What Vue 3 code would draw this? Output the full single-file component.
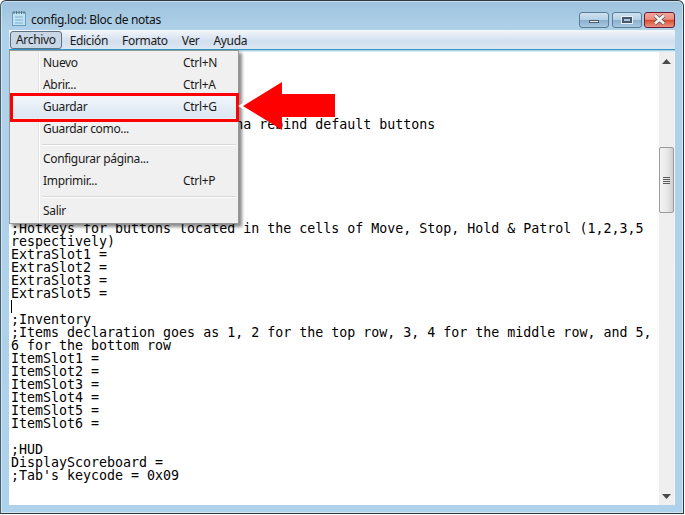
<script setup>
const lines = [
  '', '', '', '', '',
  ';Use this section if you wanna rebind default buttons',
  '', '', '', '', '', '', '',
  ';Hotkeys for buttons located in the cells of Move, Stop, Hold & Patrol (1,2,3,5',
  'respectively)',
  'ExtraSlot1 =', 'ExtraSlot2 =', 'ExtraSlot3 =', 'ExtraSlot5 =',
  '',
  ';Inventory',
  ';Items declaration goes as 1, 2 for the top row, 3, 4 for the middle row, and 5,',
  '6 for the bottom row',
  'ItemSlot1 =', 'ItemSlot2 =', 'ItemSlot3 =', 'ItemSlot4 =', 'ItemSlot5 =', 'ItemSlot6 =',
  '',
  ';HUD',
  'DisplayScoreboard =',
  ";Tab's keycode = 0x09",
]
const menuBar = ['Archivo', 'Edición', 'Formato', 'Ver', 'Ayuda']
</script>

<template>
  <div class="window">
    <header class="titlebar">
      <svg class="appicon" width="14" height="15" viewBox="0 0 14 15">
        <rect x="0.500" y="1.500" width="13" height="13" fill="#bfe3f2" stroke="#6d9cbc" />
        <path d="M2 0v3M4.500 0v3M7 0v3M9.500 0v3M12 0v3" stroke="#55707f" />
        <path d="M3 6h8M3 9h8M3 12h8" stroke="#7fb0d0" />
      </svg>
      <span class="title">config.lod: Bloc de notas</span>
      <div class="controls">
        <span class="ctl min"><i></i></span>
        <span class="ctl max"><i></i></span>
        <span class="ctl close">
          <svg width="13" height="11" viewBox="0 0 13 11">
            <path d="M2 1.500L11 9.500M11 1.500L2 9.500" stroke="#47515c" stroke-width="4" />
            <path d="M2 1.500L11 9.500M11 1.500L2 9.500" stroke="#f4f4f4" stroke-width="2.600" />
          </svg>
        </span>
      </div>
    </header>

    <nav class="menubar">
      <span v-for="(m, i) in menuBar" :key="m" class="mi" :class="{ open: i === 0 }">{{ m }}</span>
    </nav>

    <div class="client">
      <div class="editor">
        <div v-for="(l, i) in lines" :key="i" class="ln">{{ l || '\u00a0' }}<span v-if="i === 19" class="caret"></span></div>
      </div>
      <aside class="scrollbar">
        <svg class="arrow" width="9" height="5" viewBox="0 0 9 5"><path d="M4.500 0L9 5H0z" fill="#4a4a4a" /></svg>
        <div class="track">
          <div class="thumb">
            <span></span><span></span><span></span><span></span>
          </div>
        </div>
        <svg class="arrow" width="9" height="5" viewBox="0 0 9 5"><path d="M4.500 5L9 0H0z" fill="#4a4a4a" /></svg>
      </aside>
    </div>

    <div class="menu">
      <div class="row"><span>Nuevo</span><span class="key">Ctrl+N</span></div>
      <div class="row"><span>Abrir...</span><span class="key">Ctrl+A</span></div>
      <div class="row hot"><span>Guardar</span><span class="key">Ctrl+G</span></div>
      <div class="row"><span>Guardar como...</span></div>
      <div class="sep"></div>
      <div class="row"><span>Configurar página...</span></div>
      <div class="row"><span>Imprimir...</span><span class="key">Ctrl+P</span></div>
      <div class="sep short"></div>
      <div class="row"><span>Salir</span></div>
    </div>

    <div class="redbox"></div>
    <svg class="redarrow" width="97" height="48" viewBox="-5 0 97 48">
      <path d="M-5 24L2 20V28z" fill="#fff" />
      <path d="M0 24L39 0V12H92V35H39V48z" fill="#fe0000" />
    </svg>
  </div>
</template>

<style>
html, body { margin: 0; background: #fff; }
</style>

<style scoped>
.window {
  position: relative;
  width: 684px;
  height: 514px;
  box-sizing: border-box;
  display: flex;
  flex-direction: column;
  padding: 0 8px 8px 8px;
  border: 1px solid #2c3a40;
  border-left-color: #48606e;
  border-radius: 6px 6px 0 0;
  box-shadow: inset 0 0 0 1px rgba(255, 255, 255, 0.45);
  background: linear-gradient(180deg, #9fc3dd 0, #b0d1ea 30px, #aed2ec 100%);
  font-family: "Noto Sans", "Open Sans", sans-serif;
  letter-spacing: -0.33px;
}
.titlebar {
  height: 29px;
  box-sizing: border-box;
  padding: 9px 0 0 3px;
  display: flex;
  align-items: center;
  gap: 5px;
  flex: none;
}
.appicon { flex: none; margin-top: -4px; }
.title { font-size: 12px; color: #111; margin-top: -2px; }
.controls { margin-left: auto; display: flex; gap: 3px; margin-top: -1px; }
.ctl {
  height: 16px;
  box-sizing: border-box;
  border: 1px solid #5b7c97;
  border-radius: 3px;
  display: flex;
  align-items: center;
  justify-content: center;
  background: linear-gradient(180deg, #cfe1f0 0, #b6d0e6 48%, #8ab0cf 52%, #a9c8e0 100%);
}
.min, .max { width: 30px; }
.close {
  width: 31px;
  margin-left: -1px;
  border-color: #6b1c35;
  background: linear-gradient(180deg, #f3a59c 0, #ee8c80 45%, #d8472b 52%, #e06a50 70%, #ed8f82 100%);
}
.min i { display: block; width: 8px; height: 1px; margin-top: 3px; background: #eef2f5; border: 1px solid #4d5a68; }
.max i { display: block; width: 6px; height: 2px; border: 2px solid #47596a; background: #a9c4dc; outline: 1px solid #e8eef3; }
.menubar {
  height: 20px;
  flex: none;
  display: flex;
  align-items: center;
  box-sizing: border-box;
  padding: 1px 0 0 1px;
  background: linear-gradient(180deg, #f5f8fb 0, #e2eaf5 30%, #d2dfee 60%, #dde7f3 100%);
  border-bottom: 1px solid #2f9ac4;
  font-size: 12px;
  color: #1a1a1a;
}
.mi { padding: 0 7px; line-height: 17px; height: 17px; }
.mi.open {
  padding: 0 5px;
  margin-right: 1px;
  border: 1px solid #5c6f85;
  border-radius: 3px;
  background: #c8d6e6;
  box-sizing: border-box;
  height: 18px;
  line-height: 16px;
}
.client {
  flex: 1;
  min-height: 0;
  display: flex;
  margin-top: 1px;
  background: #fff;
  border-right: 1px solid #f5f5f5;
  border-top: 1px solid #dbe7f2;
  overflow: hidden;
}
.editor {
  flex: 1;
  min-width: 0;
  padding: 1px 0 0 2px;
  font-family: "DejaVu Sans Mono", "Liberation Mono", monospace;
  font-size: 13.3px;
  line-height: 13px;
  letter-spacing: 0;
  color: #000;
  white-space: pre;
  overflow: hidden;
}
.ln { height: 13px; position: relative; }
.caret { position: absolute; left: 0; top: 0; width: 1px; height: 13px; background: #000; }
.scrollbar {
  width: 15px;
  flex: none;
  background: #efefef;
  display: flex;
  flex-direction: column;
  align-items: center;
  padding: 7px 0 6px;
  box-sizing: border-box;
}
.arrow { flex: none; }
.track { flex: 1; width: 100%; padding-top: 83px; box-sizing: border-box; }
.thumb {
  height: 66px;
  box-sizing: border-box;
  border: 1px solid #9a9a9a;
  border-radius: 2px;
  background: linear-gradient(90deg, #f4f4f4 0, #e6e6e6 60%, #cfcfcf 100%);
  display: flex;
  flex-direction: column;
  align-items: center;
  justify-content: center;
  gap: 1px;
}
.thumb span { width: 7px; height: 1px; background: #5a5a5a; }
.menu {
  position: absolute;
  left: 8px;
  top: 49px;
  width: 230px;
  height: 174px;
  box-sizing: border-box;
  padding: 1px 2px 2px;
  background: linear-gradient(90deg, #f1f1f1 0, #f1f1f1 28px, #e2e3e3 28px, #e2e3e3 29px, #fff 29px, #fff 30px, #f0f0f0 30px);
  border: 1px solid #979797;
  box-shadow: 3px 3px 3px rgba(0, 0, 0, 0.45);
  font-size: 12px;
  color: #1a1a1a;
}
.row {
  height: 22px;
  line-height: 22px;
  display: flex;
  justify-content: space-between;
  padding-left: 31px;
  padding-right: 20px;
  position: relative;
}
.row .key { position: absolute; left: 171px; }
.row.hot { background: linear-gradient(180deg, #f2f6fa, #d9e6f2); }
.sep { height: 8px; margin-left: 30px; position: relative; }
.sep.short { height: 8px; }
.sep::after { content: ""; position: absolute; left: 0; right: 0; top: 4px; height: 1px; background: #d8d8d8; box-shadow: 0 1px 0 #fff; }
.redbox {
  position: absolute;
  left: 9px;
  top: 92px;
  width: 229px;
  height: 29px;
  box-sizing: border-box;
  border: 3px solid #fe0000;
}
.redarrow { position: absolute; left: 237px; top: 81px; }
</style>
